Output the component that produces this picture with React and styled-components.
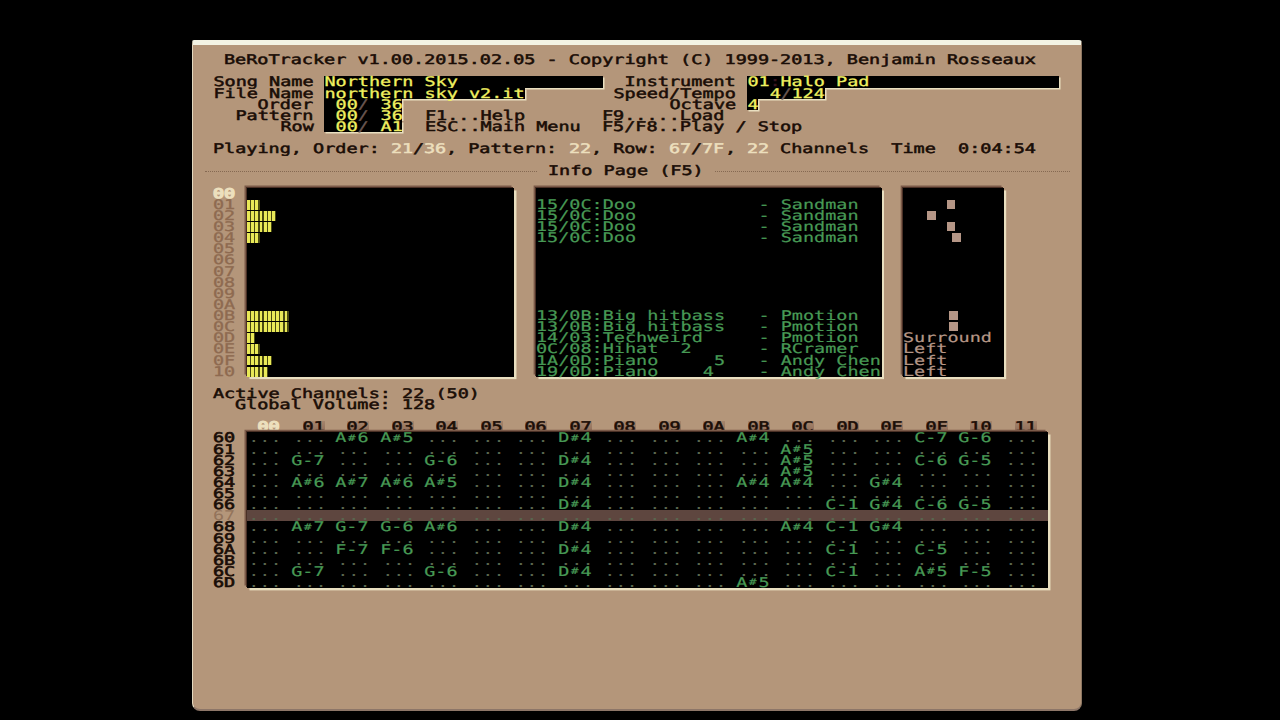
import React from 'react';
import styled, { createGlobalStyle, css } from 'styled-components';

// the whole screen sits on an 80 column text grid
const CELL = 11.125;
const FONT_SIZE = 13.3;
const STRETCH = CELL / (FONT_SIZE * 0.60205);

const colors = {
    tan: '#b4967a',
    ink: '#1a0d06',
    shade: '#7b5a49',
    light: '#e9dfc0',
    yellow: '#f0f060',
    green: '#479955',
    muted: '#8e6a50',
    pale: '#ecdfbd',
    rose: '#b59686',
};

const cols = (n) => `${n * CELL}px`;

const GlobalStyle = createGlobalStyle`
    * {
        box-sizing: border-box;
    }
    body {
        margin: 0;
        background: #000;
        overflow: hidden;
    }
`;

const Desktop = styled.main`
    width: 1280px;
    height: 720px;
    padding: 40px 0 0 191.5px;
    background: #000;
`;

const Window = styled.section`
    width: 890.5px;
    height: 670.5px;
    padding: 9.2px 0 0 20.35px;
    background: ${colors.tan};
    border-top: 5px solid #f3f3e4;
    border-left: 1.5px solid #e3d9c0;
    border-right: 1.5px solid #8d7763;
    border-bottom: 2px solid #8d7668;
    border-radius: 2px 3px 8px 8px;
`;

const Line = styled.div`
    display: flex;
    height: ${CELL}px;
    width: ${({ $cols }) => ($cols ? cols($cols) : 'auto')};
    margin-left: ${({ $indent }) => cols($indent || 0)};
    margin-top: ${({ $skip }) => cols($skip || 0)};
    background: ${({ $bg }) => $bg || 'transparent'};
`;

const Glyphs = styled.span`
    display: block;
    flex: none;
    width: ${({ $cols }) => cols($cols)};
    height: ${CELL}px;
    color: ${({ $color }) => $color || colors.ink};

    > span {
        display: inline-block;
        transform: translate(${({ $nudge }) => $nudge ?? 0}px, 0.5px) scaleX(${STRETCH});
        transform-origin: 0 0;
        font-family: 'DejaVu Sans Mono', monospace;
        font-size: ${FONT_SIZE}px;
        line-height: ${CELL}px;
        text-rendering: geometricPrecision;
        -webkit-text-stroke: ${({ $stroke }) => $stroke ?? 0.5}px currentColor;
        white-space: pre;
        vertical-align: top;
    }
`;

const Sharp = styled.i`
    display: inline-block;
    width: ${FONT_SIZE * 0.60205}px;
    font-size: 9px;
    font-style: normal;
    line-height: 8px;
    text-align: center;
    vertical-align: 1.8px;
`;

const Form = styled.div`
    display: grid;
    grid-template-columns: ${cols(36)} auto;
    margin-top: ${CELL}px;
`;

const Label = styled(Line)`
    justify-content: flex-end;
    width: ${({ $cols }) => cols($cols)};
    margin-right: ${CELL}px;
`;

const FieldRow = styled.div`
    display: flex;
    height: ${CELL}px;
`;

const Value = styled.div`
    flex: none;
    display: flex;
    width: ${({ $cols }) => `${$cols * CELL + 0.5}px`};
    height: ${CELL}px;
    background: #000;
    box-shadow: ${({ $under }) => ($under ? `1.5px 1.5px 0 ${colors.light}` : `1.5px 0 0 ${colors.light}`)};
    position: relative;
    z-index: ${({ $z }) => $z || 0};
`;

const Heading = styled.div`
    display: flex;
    align-items: center;
    width: ${cols(78)};
    height: ${CELL}px;
    margin: ${CELL}px 0 0 -8px;
`;

const Rule = styled.span`
    flex: none;
    width: ${({ $width }) => $width}px;
    border-top: 1px dotted #765a45;
    opacity: 0.75;
    margin: 0 ${({ $after }) => $after || 0}px 0 ${({ $before }) => $before || 0}px;
`;

const Row = styled.div`
    display: flex;
    margin-top: ${({ $skip }) => cols($skip || 0)};
`;

const Gutter = styled.div`
    width: ${3 * CELL + 0.8}px;
`;

const Panel = styled.div`
    flex: none;
    width: ${({ $cols }) => `${$cols * CELL + 0.4}px`};
    height: ${({ $rows }) => cols($rows)};
    margin-right: ${({ $gap }) => `${($gap || 0) * CELL - 0.4}px`};
    background: #000;
    box-shadow:
        -1px -1px 0 #4a3025,
        -2.5px -2.5px 0 ${colors.shade},
        2.5px 2.5px 0 ${colors.light};
    clip-path: polygon(-3px -3px, calc(100% + 2.5px) -3px, calc(100% + 2.5px) calc(100% + 2.5px), -3px calc(100% + 2.5px));
`;

const Meter = styled.div`
    height: ${CELL}px;
    padding: 1px 0 0.3px;
    background: repeating-linear-gradient(90deg, #e9e958 0 2.9px, #4a4a12 2.9px 4.17px) content-box;
`;

const Slot = styled.div`
    height: ${CELL}px;
    padding-top: 1.2px;
`;

const Knob = styled.div`
    width: 8.6px;
    height: 8.6px;
    background: ${colors.rose};
`;

const Tab = styled.div`
    flex: none;
    width: ${cols(2)};
    height: ${CELL}px;
    margin-right: ${cols(2)};

    ${({ $active }) => !$active && css`
        background: linear-gradient(#a5856c, #8f6d59);
    `}
`;

const Tabs = styled(Line)`
    padding-left: 0.8px;
`;

const channels = [
    { id: '00' },
    { id: '01', level: 3, sample: '15/0C:Doo', author: 'Sandman', pan: 43.2 },
    { id: '02', level: 7, sample: '15/0C:Doo', author: 'Sandman', pan: 23.7 },
    { id: '03', level: 6, sample: '15/0C:Doo', author: 'Sandman', pan: 43.2 },
    { id: '04', level: 3, sample: '15/0C:Doo', author: 'Sandman', pan: 48.6 },
    { id: '05' },
    { id: '06' },
    { id: '07' },
    { id: '08' },
    { id: '09' },
    { id: '0A' },
    { id: '0B', level: 10, sample: '13/0B:Big hitbass', author: 'Pmotion', pan: 46 },
    { id: '0C', level: 10, sample: '13/0B:Big hitbass', author: 'Pmotion', pan: 46 },
    { id: '0D', level: 2, sample: '14/03:Techweird', author: 'Pmotion', pan: 'Surround' },
    { id: '0E', level: 3, sample: '0C/08:Hihat  2', author: 'RCramer', pan: 'Left' },
    { id: '0F', level: 6, sample: '1A/0D:Piano     5', author: 'Andy Chen', pan: 'Left' },
    { id: '10', level: 5, sample: '19/0D:Piano    4', author: 'Andy Chen', pan: 'Left' },
];

const tabs = ['00', '01', '02', '03', '04', '05', '06', '07', '08', '09', '0A', '0B', '0C', '0D', '0E', '0F', '10', '11'];

const pattern = [
    ['60', { 2: 'A#6', 3: 'A#5', 7: 'D#4', 11: 'A#4', 15: 'C-7', 16: 'G-6' }],
    ['61', { 12: 'A#5' }],
    ['62', { 1: 'G-7', 4: 'G-6', 7: 'D#4', 12: 'A#5', 15: 'C-6', 16: 'G-5' }],
    ['63', { 12: 'A#5' }],
    ['64', { 1: 'A#6', 2: 'A#7', 3: 'A#6', 4: 'A#5', 7: 'D#4', 11: 'A#4', 12: 'A#4', 14: 'G#4' }],
    ['65', {}],
    ['66', { 7: 'D#4', 13: 'C-1', 14: 'G#4', 15: 'C-6', 16: 'G-5' }],
    ['67', {}],
    ['68', { 1: 'A#7', 2: 'G-7', 3: 'G-6', 4: 'A#6', 7: 'D#4', 12: 'A#4', 13: 'C-1', 14: 'G#4' }],
    ['69', {}],
    ['6A', { 2: 'F-7', 3: 'F-6', 7: 'D#4', 13: 'C-1', 15: 'C-5' }],
    ['6B', {}],
    ['6C', { 1: 'G-7', 4: 'G-6', 7: 'D#4', 13: 'C-1', 15: 'A#5', 16: 'F-5' }],
    ['6D', { 11: 'A#5' }],
];

const status = [
    ['Playing, Order: '],
    ['21', colors.pale],
    ['/'],
    ['36', colors.pale],
    [', Pattern: '],
    ['22', colors.pale],
    [', Row: '],
    ['67', colors.pale],
    ['/'],
    ['7F', colors.pale],
    [', '],
    ['22', colors.pale],
    [' Channels  Time  0:04:54'],
];

const Text = ({ children, color, cells, stroke, nudge }) => (
    <Glyphs $cols={cells || children.length} $color={color} $stroke={stroke} $nudge={nudge}>
        <span>{children}</span>
    </Glyphs>
);

const Note = ({ value }) => {
    if (!value) return <Text color='#59664f' stroke={0} nudge={1.2}>... </Text>;
    return (
        <Text color={colors.green} cells={4} stroke={0.2} nudge={-0.8}>
            {value[0]}
            {value[1] === '#' ? <Sharp>#</Sharp> : value[1]}
            {value[2]}
        </Text>
    );
};

const Field = ({ label, labelCols, value, size, under, z }) => (
    <FieldRow>
        <Label $cols={labelCols}><Text nudge={0.5}>{label}</Text></Label>
        <Value $cols={size || value.length} $under={under} $z={z}>
            {value.split(/(\/|:)/).map((part, i) => (
                part && <Text key={i} color={i % 2 ? (part === ':' ? '#3a1420' : '#6a5650') : colors.yellow} stroke={0.3} nudge={0.4}>{part}</Text>
            ))}
        </Value>
    </FieldRow>
);

const App = () => {

  return (
    <Desktop>
        <GlobalStyle />
        <Window>
            <Line $indent={1}>
                <Text>BeRoTracker v1.00.2015.02.05 - Copyright (C) 1999-2013, Benjamin Rosseaux</Text>
            </Line>
            <Form>
                <div>
                    <Field label='Song Name' labelCols={9} value='Northern Sky' size={25} under z={1} />
                    <Field label='File Name' labelCols={9} value='northern sky v2.it' under z={2} />
                    <Field label='Order' labelCols={9} value=' 00/ 36' z={3} />
                    <FieldRow>
                        <Field label='Pattern' labelCols={9} value=' 00/ 36' z={3} />
                        <Line $indent={2}><Text>F1...Help</Text></Line>
                    </FieldRow>
                    <FieldRow>
                        <Field label='Row' labelCols={9} value=' 00/ A1' under z={3} />
                        <Line $indent={2}><Text>ESC..Main Menu</Text></Line>
                    </FieldRow>
                </div>
                <div>
                    <Field label='Instrument' labelCols={11} value='01:Halo Pad' size={28} under z={1} />
                    <Field label='Speed/Tempo' labelCols={11} value='  4/124' under z={2} />
                    <Field label='Octave' labelCols={11} value='4' under z={3} />
                    <Line $indent={-1}><Text>F9.....Load</Text></Line>
                    <Line $indent={-1}><Text>F5/F8..Play / Stop</Text></Line>
                </div>
            </Form>
            <Line $skip={1}>
                {status.map(([text, color], i) => (
                    <Text key={i} color={color}>{text}</Text>
                ))}
            </Line>
            <Heading>
                <Rule $width={332} $after={10.8} />
                <Text>Info Page (F5)</Text>
                <Rule $width={355} $before={12} />
            </Heading>
            <Row $skip={1}>
                <Gutter>
                    {channels.map(({ id }, i) => (
                        <Line key={id}><Text color={i ? colors.muted : colors.pale} stroke={i ? 0.3 : 1.3}>{id}</Text></Line>
                    ))}
                </Gutter>
                <Panel $cols={24} $rows={17} $gap={2}>
                    {channels.map(({ id, level = 0 }) => (
                        <Meter key={id} style={{ width: level * 4.17 }} />
                    ))}
                </Panel>
                <Panel $cols={31} $rows={17} $gap={2}>
                    {channels.map(({ id, sample, author }) => (
                        <Line key={id}>
                            {sample && <Text color={colors.green} stroke={0.2}>{`${sample.padEnd(20)}- ${author}`}</Text>}
                        </Line>
                    ))}
                </Panel>
                <Panel $cols={9} $rows={17}>
                    {channels.map(({ id, pan }) => (
                        typeof pan === 'string'
                            ? <Line key={id}><Text color={colors.rose} stroke={0.2}>{pan}</Text></Line>
                            : <Slot key={id}>{pan && <Knob style={{ marginLeft: pan }} />}</Slot>
                    ))}
                </Panel>
            </Row>
            <Line $skip={1}><Text>Active Channels: 22 (50)</Text></Line>
            <Line $indent={2}><Text>Global Volume: 128</Text></Line>
            <Tabs $skip={1} $indent={4}>
                {tabs.map((id, i) => (
                    <Tab key={id} $active={i === 0}>
                        <Text color={i ? colors.ink : colors.pale} stroke={i ? 0.5 : 1.3} nudge={-0.5}>{id}</Text>
                    </Tab>
                ))}
            </Tabs>
            <Row>
                <Gutter>
                    {pattern.map(([id]) => (
                        <Line key={id}><Text color={id === '67' ? '#93735a' : colors.ink} stroke={id === '67' ? 0 : 0.6}>{id}</Text></Line>
                    ))}
                </Gutter>
                <Panel $cols={72} $rows={14}>
                    {pattern.map(([id, notes]) => (
                        <Line key={id} $bg={id === '67' ? '#5e463f' : undefined}>
                            {tabs.map((tab, i) => <Note key={tab} value={notes[i]} />)}
                        </Line>
                    ))}
                </Panel>
            </Row>
        </Window>
    </Desktop>
  )
}

export default App
